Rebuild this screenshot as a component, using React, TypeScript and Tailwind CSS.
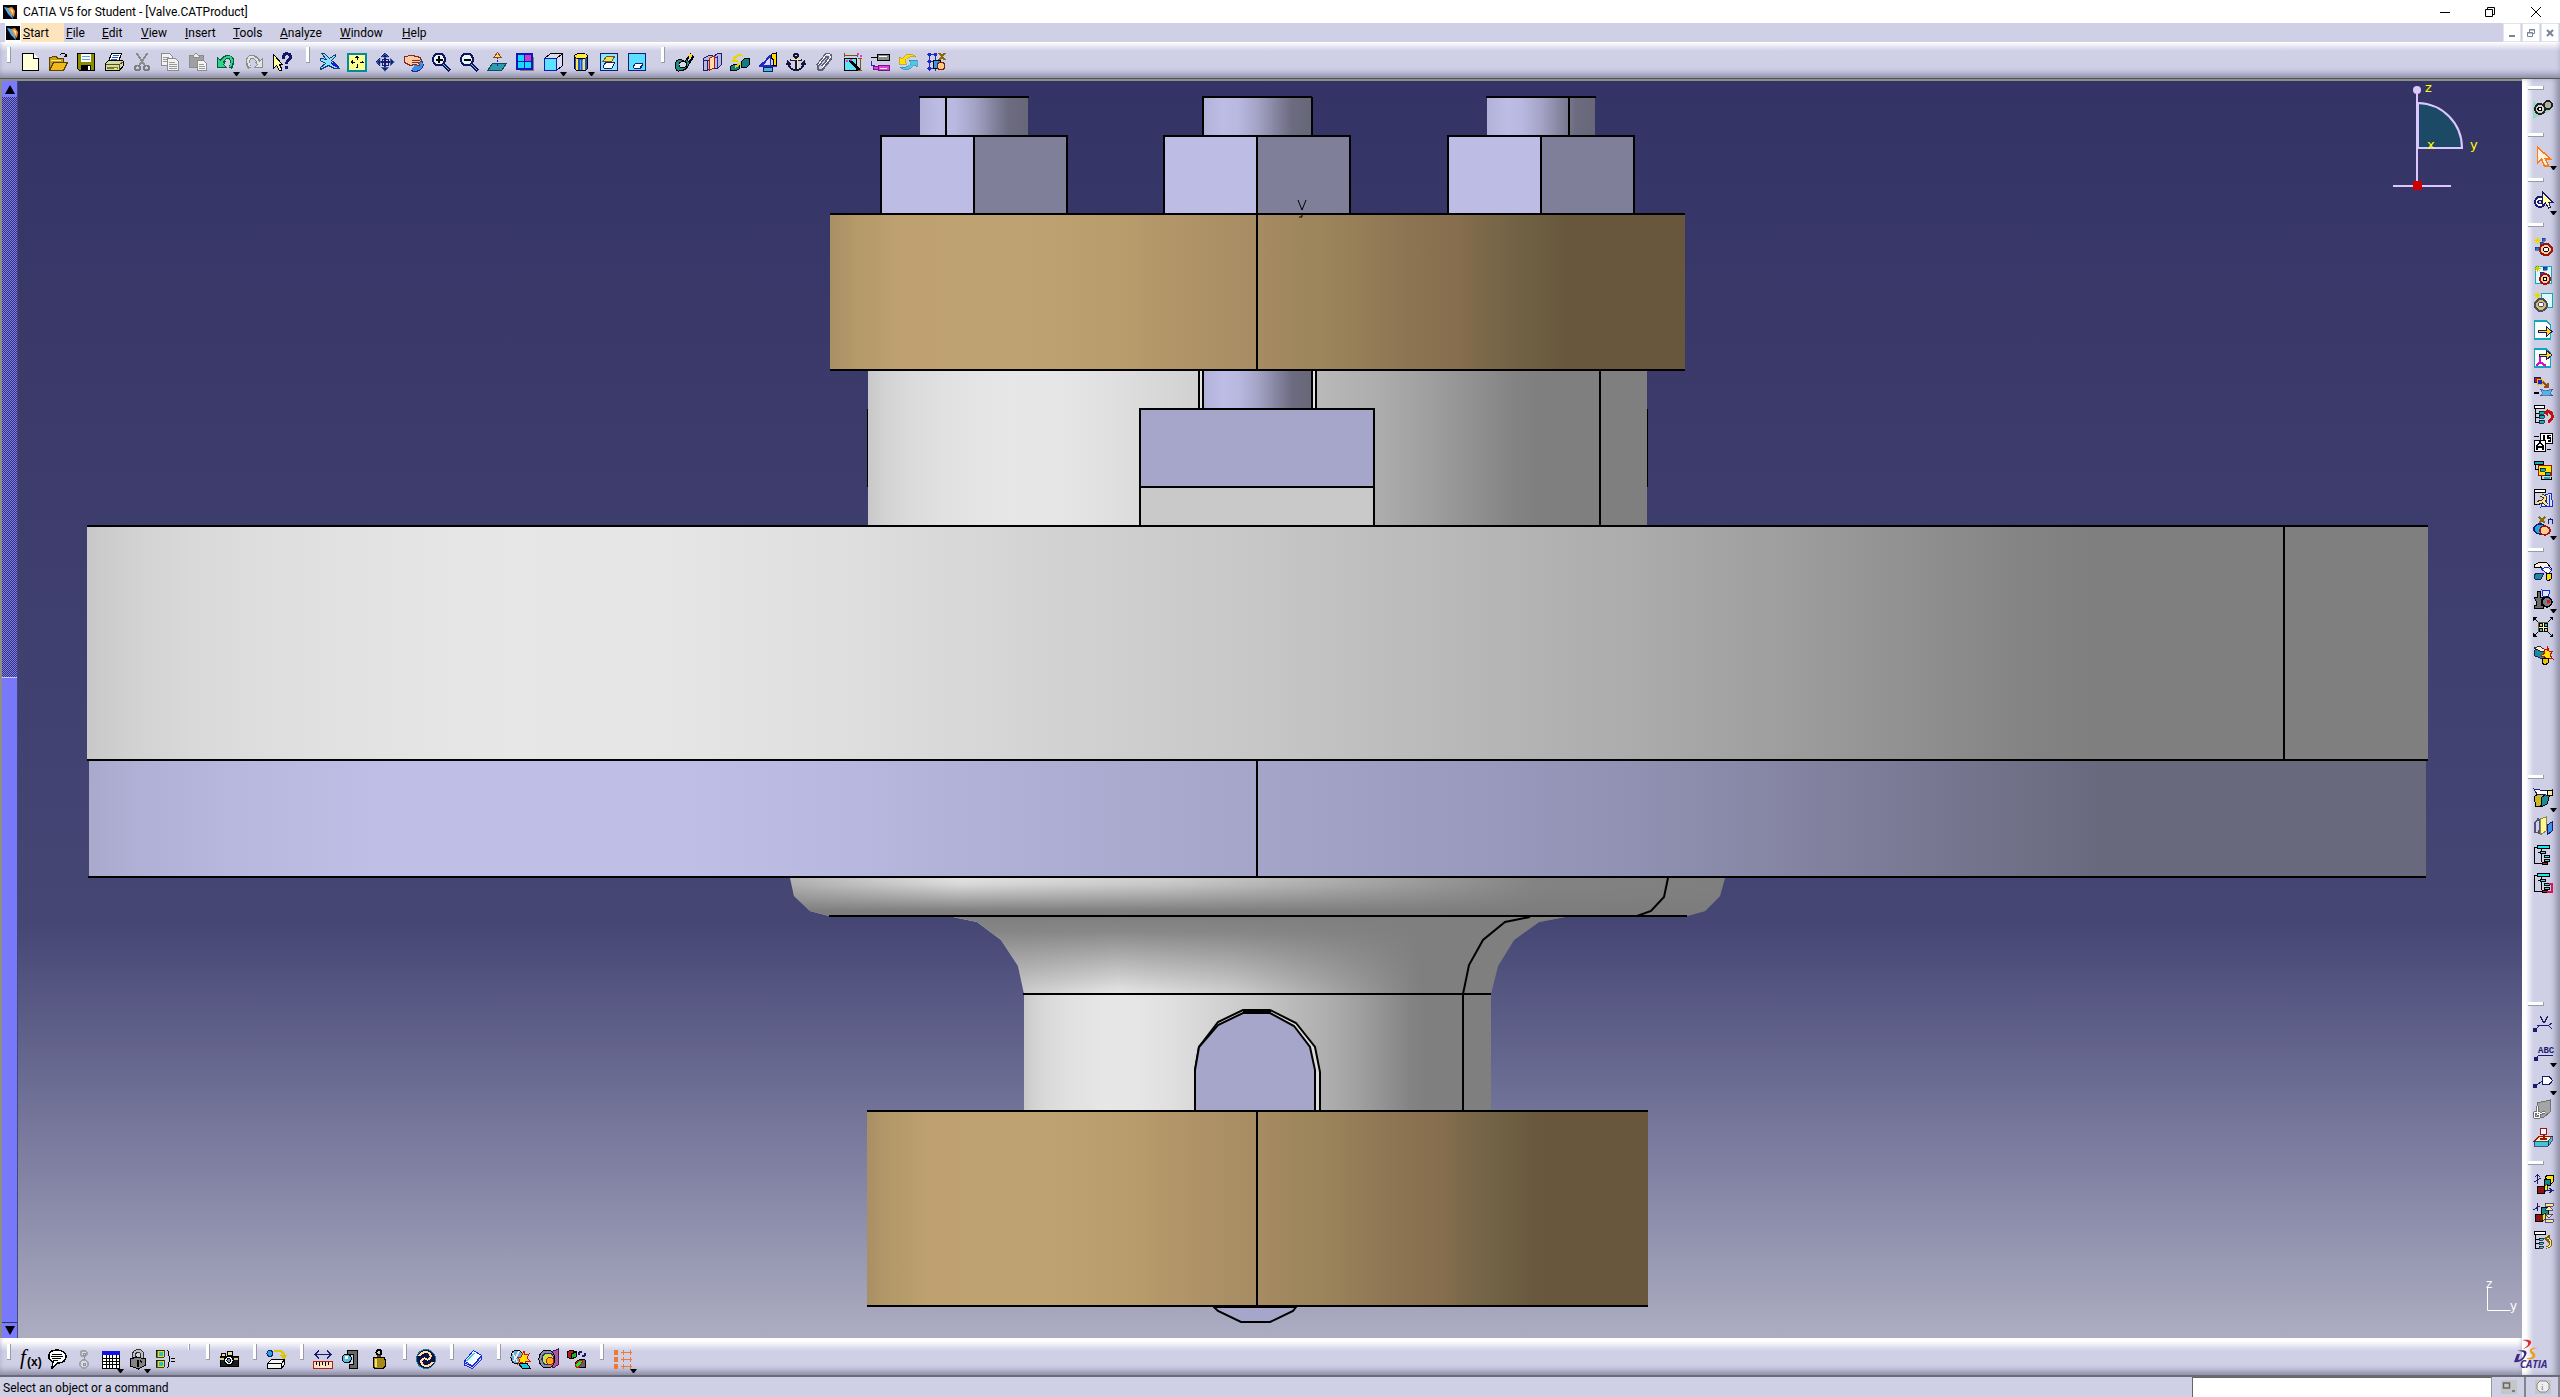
import type { ReactNode } from "react";

type Shape = [d: string, fill?: string, stroke?: string, width?: number];

const K = "#000";
const N = "#1a1a6e";

const ICONS: Record<string, Shape[]> = {
  new: [["M2.5 1.5h11l5 5v12h-16z", "#ffffd8", K], ["M13.5 1.5v5h5", "#fff", K]],
  open: [
    ["M1.5 17.5v-12h2l1-1h4l1 2h6v4", "#c8a018", "#5a4200"],
    ["M1.5 18.5l4-8h14l-4 8z", "#f2b91c", "#5a4200"],
    ["M3 8h10v1h-10z", "#ffe98a"],
    ["M11.5 3.5l2-2h3l2 3M18.5 1.5v3h-3", "none", K],
  ],
  save: [
    ["M1.5 1.5h17v17h-15l-2-2z", "#8c8c00", K],
    ["M5 2h10v8h-10z", "#fff"],
    ["M6 4.5h8M6 7.5h8", "none", "#5aa0e0"],
    ["M5 13h10v6h-10z", K],
    ["M12 14h2v4h-2z", "#fff"],
  ],
  print: [
    ["M7.5 1.5h10l-3 8h-10z", "#fff", K],
    ["M9 3.5h6M8 5.5h6M7 7.5h6", "none", "#2858c8"],
    ["M1.5 11.5l3-3h14l1 1v4l-4 5h-14z", "#d8d8a8", K],
    ["M15.5 12v6M1.5 12.5h14l4-3", "none", "#505020"],
    ["M3 15h11v2h-11z", "#7a7a20"],
    ["M10 16h3v1h-3z", "#ff0"],
  ],
  cut: [
    ["M4.5 1l8 12M15.5 1l-8 12", "none", "#8c8c8c", 2],
    ["M5.5 13.5a2.5 2.5 0 1 1-.1 0zM14.5 13.5a2.5 2.5 0 1 1-.1 0z", "none", "#7c7c7c", 2],
  ],
  copy: [
    ["M1.5 1.5h8l3 3v9h-11z", "#f2f2f2", "#8c8c8c"],
    ["M3 5.5h6M3 7.5h6M3 9.5h6", "none", "#9a9a9a"],
    ["M7.5 6.5h8l3 3v9h-11z", "#f2f2f2", "#8c8c8c"],
    ["M9 10.5h6M9 12.5h8M9 14.5h8M9 16.5h8", "none", "#9a9a9a"],
  ],
  paste: [
    ["M1.5 3.5h14v12h-14z", "#a0a0a0", "#8c8c8c"],
    ["M5 3.5l3-2 3 2v2h-6z", "#eee", "#8c8c8c"],
    ["M9.5 8.5h6l3 3v7h-9z", "#f4f4f4", "#8c8c8c"],
    ["M11 12.5h5M11 14.5h6M11 16.5h6", "none", "#9a9a9a"],
  ],
  undo: [
    ["M4 12c3-6 6-8 9-7s5 5 1 11", "none", "#075a3c", 4],
    ["M1.5 5.5v10h9l-3-3 2-3-3 1z", "#2fd48c", "#075a3c"],
    ["M5 11c3-5 5-6.5 8-6s4 5 1 10", "none", "#2fd48c", 2],
  ],
  redo: [
    ["M16 12c-3-6-6-8-9-7s-5 5-1 11", "none", "#8c8c8c", 4],
    ["M18.5 6.5v9h-8l3-3-2-2 3 0z", "#e4e4e4", "#8c8c8c"],
    ["M15 11c-3-5-5-6.5-8-6s-4 5-1 10", "none", "#e4e4e4", 2],
  ],
  help: [
    ["M1.5 2.5v14l3-3 3 5h2v-2l-2-4h3z", "#ffffa0", K],
    ["M11.5 7v-3c1-3 7-3 7 1 0 3-4 3-4 7M14.5 14v3", "none", "#14146a", 3],
  ],
  fly: [
    ["M2.5 1.5l5 6-6-1v2l5 3-5 4v2l8-4 6 3 5 0-3-4-5-4 4-4v-2l-6 4-5-5z", "#8ce0ff", "#103c78", 1],
    ["M12 11l7 4", "none", "#1818e0", 2],
  ],
  fit: [
    ["M1 1.5h18v17h-18z", "#ffff8c", "#008c9c", 2],
    ["M10 4v4M10 12v4M3.5 10h4M12.5 10h4", "none", K, 1],
    ["M8 5.5h4l-2-2.5zM8 14.5h4l-2 2.5zM5.5 8v4l-2.5-2zM14.5 8v4l2.5-2z", K],
  ],
  pan: [
    ["M10 3v14M3 10h14", "none", N, 2],
    ["M6 5h8l-4-4.5zM6 15h8l-4 4.5zM5 6v8l-4.5-4zM15 6v8l4.5-4z", N, "#4aa0d8", 0.5],
    ["M7 7h6v6h-6z", "none", N],
  ],
  rotate: [
    ["M8 18.5a6 5 0 1 0 8-12", "#3c8ce8", "#1c2c9c"],
    ["M1.5 4.5l8-1 8 2 1 4-3 1 1 3-5-1-4 1-6-3z", "#ffc8a8", "#7c2c1c"],
    ["M9 8h8M9 10h7", "none", "#7c2c1c"],
  ],
  zoomin: [
    ["M8 1.5a6 6 0 1 1-.1 0z", "#e4f6ff", "#14145a", 2],
    ["M12 12l7 7", "none", "#14145a", 3],
    ["M12 12l6.5 6.5", "none", "#5cc8f0", 1],
    ["M4.5 7.5h7M8 4v7", "none", K, 2],
  ],
  zoomout: [
    ["M8 1.5a6 6 0 1 1-.1 0z", "#e4f6ff", "#14145a", 2],
    ["M12 12l7 7", "none", "#14145a", 3],
    ["M12 12l6.5 6.5", "none", "#5cc8f0", 1],
    ["M4.5 7.5h7", "none", K, 2],
  ],
  normal: [
    ["M.5 18.5l5-7h14l-5 7z", "#2c9cac", "#0c4c5c"],
    ["M10.5 14v-2M10.5 10v-2M10.5 7v-2", "none", "#1818c0", 1],
    ["M7 5h7l-3.5-4.5z", "#ffe060", "#8a4a1c", 1],
  ],
  multi: [
    ["M5 5h14v14h-14z", "#7c7c8c"],
    ["M2 2h15v15h-15z", "#14dcff", "#1414c0", 2],
    ["M10 3h6v6h-6z", "#c83cc8"],
    ["M9.5 1v17M1 9.5h17", "none", "#1414c0", 1],
  ],
  iso: [
    ["M1.5 6.5l6-5h12v12l-6 5", "#dcdcf0", K],
    ["M1.5 6.5h12v12h-12z", "#5ce4ff", "#1414c0"],
    ["M13.5 6.5l6-5", "none", K],
  ],
  shade: [
    ["M3.5 4v12c1 4 12 4 13 0v-12", "#1c50d8", K],
    ["M3.5 4a6.5 2.5 0 1 1 13 0 6.5 2.5 0 1 1-13 0", "#ffe840", K],
    ["M6 7v11M13 7v11", "none", "#ffe840", 2],
    ["M9 8v10M11 8v10", "none", "#5ca0f0", 1],
  ],
  hide: [
    ["M1.5 1.5h17v17h-17z", "#8ce8ff", N, 1],
    ["M4 9l4-5h8l-3 5z", "#f4d868", "#6c5c10"],
    ["M4 15l3-5h9l-3 6h-8z", "#fff", N],
    ["M13 16l3-6", "none", N],
  ],
  swap: [
    ["M1.5 1.5h17v17h-17z", "#5ce0ff", N, 1],
    ["M6 15l3-4h7l-2 5h-7z", "#fff", N],
    ["M13 16l3-4", "none", N],
  ],
  coincide: [
    ["M1.5 12c0-5 6-6 9-2l6-8 3 3-5 8c-2 5-7 6-10 6s-3-3-3-7z", "#1c8c84", K],
    ["M5 13a4 3 0 1 0 8-1 4 3 0 1 0-8 1", "#d8d8ec", K],
    ["M13 8l4-6 2 2-4 6z", "#d0d0e8", K],
    ["M15 2h3v3h-3z", "#ffe000"],
  ],
  contact: [
    ["M1.5 6.5l5-3h4v11l-5 4h-4z", "#b8b8d8", N],
    ["M1.5 8.5h5M5.5 8v10", "none", N],
    ["M11.5 4.5l4-3h4v11l-4 4h-4z", "#b8b8d8", N],
    ["M15.5 4v12M12 5.5h3", "none", "#1c28c8"],
    ["M7.5 6.5l5-3v12l-5 3z", "#ffe0a0", "#c01010"],
  ],
  offset: [
    ["M11.5 9.5l3-3h5v6l-3 3h-5z", "#107c84", K],
    ["M.5 14.5l3-2h6v4l-3 2h-6z", "#107c84", K],
    ["M4 8c2-5 6-6 9-4M5 4l-2 5 5 0M11 11l-6 4", "none", "#e8d800", 2],
  ],
  angle: [
    ["M1.5 13.5l11-9v9z", "#d8d8f0", "#1c28c8"],
    ["M3 14l10-11M1 13.5h18", "none", "#1c28c8", 2],
    ["M5 15h9v4h-9z", "#3cc0d0", N],
    ["M14 2l4-1v12h-3l1-5-3-2z", "#ffd800", K],
  ],
  anchor: [
    ["M10 1.5a2 2 0 1 1-.1 0zM10 5v13M4 7.5h12", "none", "#14143c", 2],
    ["M2 11c1 5 4 7 8 7s7-2 8-7M1 13l1-3 3 3M19 13l-1-3-3 3", "none", "#14143c", 2],
    ["M11 6v11M5 7.5h10", "none", "#ffe890", 1],
  ],
  clip: [
    ["M3 13l8-10c3-3 8 0 6 4l-8 10c-3 3-7 0-5-3l8-9c2-1 3 1 2 2l-6 7", "none", "#606078", 2],
    ["M4 13l8-10c2-2 5 0 4 3l-8 10", "none", "#fff", 1],
  ],
  quick: [
    ["M2.5 6.5h12v12h-12z", "#5ce4f4", K],
    ["M2 3h13M2 1v4M15 1v4M18 6v12M16 6h4M16 18h4", "none", "#6c5c14", 1],
    ["M8 8l9 10", "none", K, 3],
    ["M4 8h2v2h-2zM8 7h2v2h-2zM15 1h2v2h-2zM18 3h2v2h-2z", "#f030d0"],
  ],
  flex: [
    ["M1 5.5h6M7 2.5h12v6h-12z", "#8c8c8c", K],
    ["M8 13.5h11v5h-11zM3 14.5h5v3h-5z", "#e040e0", "#7c107c"],
    ["M1.5 9v4h3", "none", "#1c28c8", 1],
    ["M9 4.5h8M10 16h7", "none", "#fff", 1],
  ],
  change: [
    ["M1 12l0-7 3 2c4-6 10-6 14-2-5-1-9 0-11 4l2 3z", "#ffe000", "#a07c00", 0.5],
    ["M19 8l0 7-3-2c-4 6-10 6-14 2 5 1 9 0 11-4l-2-3z", "#4cc8e8", "#0c6c9c", 0.5],
  ],
  reuse: [
    ["M1 2.5h10M1 9.5h10M1 16.5h8M3.5 1v18M9.5 1v18", "none", "#1c28c8", 1],
    ["M2 1h3v3h-3zM8 1h3v3h-3zM2 8h3v3h-3zM2 15h3v3h-3z", "#1c28c8"],
    ["M7 8h7v8h-7z", "#2c9cf0", K],
    ["M15 10a4 4 0 1 1-.1 0z", "#ffcc80", "#7c1c10"],
    ["M13 1l6 7M19 1l-6 7", "none", "#8a6c10", 2],
  ],
  gears: [
    ["M0 2l19 9-19 9z", "#9cd8c8"],
    ["M7 5a5 5 0 1 1-.1 0z", "#d0d0d0", "#202020", 2],
    ["M15 2a4 4 0 1 1-.1 0z", "#b0b0a0", "#202020", 2],
    ["M7 8a2 2 0 1 1-.1 0z", "#fff", K],
  ],
  select: [["M4.5 1v16l4-4 3 7h4l-3-7h5z", "#fff2e0", "#ff7a14", 1.5]],
  geoselect: [
    ["M7 6a5 5 0 1 1-.1 0z", "#fff", N, 2],
    ["M7 9a2 2 0 1 1-.1 0z", "#cfcfe6", N],
    ["M9.5 1v14l3-3 3 5 2-1-2-5h4z", "#ffff9c", N],
  ],
  component: [
    ["M1 4.5h7M4.5 1v7M2 2l5 5M7 2l-5 5", "none", "#e8d800", 1],
    ["M9 2h3v3h-3zM7 6h3v3h-3zM2 11h4v3h-4z", "#1c70e0", N, 0.5],
    ["M13 8a6 5.5 0 1 1-.1 0z", "#ffcc90", "#9c1410", 2],
    ["M13 11a2.5 2.5 0 1 1-.1 0z", "#fff", K],
  ],
  product: [
    ["M2 2.5h16v17h-16z", "#dffaff", "#10a8b8", 1],
    ["M1 4.5h7M4.5 1v7M2 2l5 5M7 2l-5 5", "none", "#d8c800", 1],
    ["M10 3h4v3h-4zM7 8h4v3h-4z", "#1c50c0", N, 0.5],
    ["M12 10a5 5 0 1 1-.1 0z", "#ffcc90", "#9c1410", 2],
    ["M12 13a2 2 0 1 1-.1 0z", "#fff", K],
  ],
  part: [
    ["M8.5 1.5h11v14h-11z", "#dffaff", "#10a8b8", 1],
    ["M8 7a6 6 0 1 1-.1 0z", "#d0bc78", "#4c4c5c", 2],
    ["M8 10a2.5 2.5 0 1 1-.1 0z", "#fff", "#4c4c5c"],
    ["M1 3.5h7M4.5 0v7M2 1l5 5M7 1l-5 5", "none", "#e8d800", 1],
  ],
  existing: [
    ["M1.5 1h12l4 4v14h-16z", "#fff", "#10a8b8", 1.5],
    ["M5 10.5h8v-4l6 5-6 5v-4h-8z", "#ffe000", N, 1],
  ],
  existpos: [
    ["M1.5 1h12l4 4v14h-16z", "#fff", "#10a8b8", 1.5],
    ["M6 6h7v-4l6 5-6 5v-4h-7z", "#ffe000", N, 1],
    ["M7 9v5l-4 4M7 14l6 4", "none", "#d010c8", 2],
  ],
  replace: [
    ["M1.5 1.5h6v5h-6z", "#c01818", N],
    ["M4 3h5v5h-5z", "#1c28c8", "#e8c000", 1],
    ["M10 6l5 5M15 7v4h-4", "none", "#9c4c10", 2],
    ["M7 13l5 2 8-2-3 4 3 3-8-1-5 1 3-3z", "#4cb8e8", N, 0.5],
    ["M1 17h5", "none", K, 2],
  ],
  reorder: [
    ["M1.5 1.5h10v3h-10z", "#fff", K],
    ["M2.5 4v14h5M2 9h5M2 13h5", "none", K],
    ["M6 7h5v3h-5zM6 11h5v3h-5zM6 16h5v3h-5z", "#10b0b8", K, 0.7],
    ["M13 8c8-2 8 8 2 10", "none", "#c01010", 3],
    ["M11 9l4-5v8z", "#c01010"],
  ],
  number: [
    ["M7.5 1.5h12v10h-12z", "#fff", K],
    ["M1.5 8.5h11v11h-11z", "#fff", K],
    ["M4 18v-4l3-4 3 4v4M4 15h6", "none", K, 1.5],
    ["M11 3v6M18 3.5h-3v2.5h2.5v3h-3", "none", K, 1.5],
    ["M1 4.5h5M14 17.5h4", "none", K],
  ],
  tree: [
    ["M1 1.5h9v3h-9z", "#10b0b8", K],
    ["M5.5 5.5h13v10h-13z", "#ffe800", "#a01010", 1.5],
    ["M7 8h5v3h-5zM12 12h5v3h-5z", "#10b0b8", K, 0.7],
    ["M2.5 5v4h3M8.5 16v3h10v-2", "none", K],
    ["M11 17h6v2h-6z", "#10b0b8"],
  ],
  load: [
    ["M1 1.5h11v3h-11z", "#fff", K],
    ["M1.5 4v12h5", "none", K],
    ["M12 7l6-2 2 13-12 1z", "#d8e4ff", "#1c28c8"],
    ["M13 8v10M16 7v11", "none", "#1c28c8"],
    ["M8 7l4 2-1 5 3 3M4 15l7-2", "none", "#3c3420", 4],
    ["M8 7l4 2-1 5 3 3M4 15l7-2", "none", "#f8e4a0", 2],
  ],
  multiinst: [
    ["M7 8a6 5 0 1 1-.1 0z", "#1ca8e0", N, 1.5],
    ["M12 10a5 4.5 0 1 1-.1 0z", "#ffcc90", "#9c1410", 1.5],
    ["M6 1l6 6M12 1l-6 6", "none", "#8a6c10", 2],
    ["M15.5 8v-5M15.5 4.5l2-1.5 2 1v4", "none", N, 1],
  ],
  manip: [
    ["M1.5 4l5-3h7l5 7-6 1-5-3-6 1z", "#fff0e0", K],
    ["M8 8l6-2 5 3-4 4z", "#fff", "#1c28e0"],
    ["M1 14l3-2h7l-3 6h-6z", "#1c8c94", N],
    ["M13 12h5v6l-3 2-2-2z", "#ffe000", K],
  ],
  snap: [
    ["M4 2h3v6h3l-2 4v4h2v3h-9v-3h2v-4l-2-4h3z", "#6c6c6c", K],
    ["M9 1l8 1-2 6-5-1z", "#dce8ff", "#1c28e0"],
    ["M14 8a5 5 0 1 1-.1 0z", "#7c7c84", K, 1.5],
    ["M14 11h3v3h-3z", "#d01818"],
  ],
  explode: [
    ["M1 1l5 5M19 1l-5 5M1 19l5-5M19 19l-5-5", "none", K, 1],
    ["M0 0h4l-4 4zM20 0h-4l4 4zM0 20h4l-4-4zM20 20h-4l4-4z", K],
    ["M5.5 5.5h9v9h-9z", "#ffffc0", "#606040"],
    ["M6.5 6.500h3v3h-3zM11.5 11.5h3v3h-3z", "#f0d060", K, 1],
    ["M11.5 6.5h3v3h-3zM6.5 11.5h3v3h-3z", "#40b8b8", K, 1],
  ],
  clash: [
    ["M1 6l4-3h5l4 6-4 5-8-3z", "#1c8c94", N],
    ["M1 3l5-2 6 4-3 2z", "#fff0e0", K, 0.8],
    ["M14 1l2 5 4 0-3 4 3 4-5-1-3 3 0-4-4-1 4-3-1-4 3 1z", "#ffe000", "#c01010"],
    ["M9 13h6v5l-3 2-3-2z", "#e8c800", K],
  ],
  section: [
    ["M1 9l4-3h7v11l-9 2z", "#c8b828", K],
    ["M8 10l5-4h4l-3 10-6 3z", "#1c8c94", K],
    ["M1 1l12 2 6-1v5h-6l-9-1z", "#fff", N],
    ["M14 2h5v5h-5z", "#ffe890", K],
  ],
  symmetry: [
    ["M2 7l3-4 2 2-1 12-4-1z", "none", "#505078", 1.5],
    ["M7 3l6-2v14l-6 4z", "#fff890", "#8a8a4c"],
    ["M14 9l5-3v9l-5 4z", "#3c90e8", N],
  ],
  assembly: [
    ["M4 1.5h12v3h-12z", "#20e8f0", K],
    ["M4.5 3h-3v16h7M8.5 5v13M5 8h5", "none", K, 1],
    ["M7 7h5v2h-5zM11 11h5v2h-5zM11 15h5v2h-5z", "#20e8f0", K, 1],
    ["M9 18h5v2h-5z", "#e01010", K, 1],
  ],
  assembly2: [
    ["M4 1.5h12v3h-12z", "#20e8f0", K],
    ["M4.5 3h-3v16h7M8.5 5v13M5 8h5", "none", K, 1],
    ["M7 7h5v2h-5zM11 11h5v2h-5zM11 15h5v2h-5z", "#20e8f0", K, 1],
    ["M9 18h5v2h-5z", "#e01010", K, 1],
    ["M16 12h3v8h-5", "none", "#e01050", 1.5],
  ],
  weld: [["M7 1l4 7 4-7", "none", N, 1.2], ["M4 10.5h12M16 10l3-2M16 11l3 3M2 15l4-4", "none", N, 1], ["M0 13h4v4h-4z", N]],
  text: [["M5.5 12.5h14M2 16l4-4", "none", N], ["M1 14h4v4h-4z", N]],
  flag: [["M9.5 5.5h7l3 4-3 4h-7z", "#fff", N, 1.2], ["M9 10l-5 4", "none", N, 1], ["M0 13h4v4h-4z", N]],
  view3d: [
    ["M4 4l13-3v12l-6 5h-7z", "#a4a4a4", "#707070"],
    ["M4 16v-9M4 16l8-3M1 16a3 3 0 1 0 6 0 3 3 0 1 0-6 0", "none", "#707070", 3],
    ["M4 16v-9M4 16l8-3M1 16a3 3 0 1 0 6 0 3 3 0 1 0-6 0", "none", "#fff", 1],
  ],
  annotate: [
    ["M7.5 1.5h6v6h-6z", "#fff", "#a01010"],
    ["M1.5 14l5-5h13l-4 5z", "#fff0a0", "#a01010"],
    ["M1 14h14v5h-14zM15 14l4-5v5l-4 5z", "#40c8d0", N, 0.7],
    ["M10.5 7v4M7 12h7", "none", "#a01010", 2],
  ],
  move1: [
    ["M12 3l3-2h5v7l-3 3z", "#ffe800", K, 1],
    ["M11 5h6v6h-6z", "#108c8c", K],
    ["M11 12l3-2v6l-3 2z", "#ffe800", K, 0.7],
    ["M4 12h7v7h-7z", "#901018", K],
    ["M4.5 1v9M1 8l7-4M2 3l2.5-2.5L7 3M12 16.5h7M16 14l4 2.5-4 2.5", "none", N, 1],
  ],
  move2: [
    ["M8 5h7v7h-7z", "#108c8c", K],
    ["M2 12h7v7h-7z", "#901018", K],
    ["M9 13l3-2v6l-3 2z", "#ffe800", K, 0.7],
    ["M12 1h8v3h-8zM12 17h8v3h-8zM12 8h8l-4-4zM12 12h8l-4 4z", "#ffe890", N, 0.7],
    ["M4 1v8M0 8l7-4", "none", N, 1],
  ],
  treeundo: [
    ["M1 1.5h11v3h-11z", "#fff", K],
    ["M2.5 4v14h3M2 9h4M2 13h4", "none", K],
    ["M6 8h4v2h-4zM6 12h4v2h-4zM6 16h4v2h-4z", "#40c8e0", K, 0.7],
    ["M13 17c6 1 6-7 1-9l3-2M13 8l4 4", "none", "#7c5c10", 3],
    ["M13 17c6 1 6-7 1-9", "none", "#ffe890", 1],
  ],
  formula: [],
  comment: [
    ["M10 1c12 0 12 13 1 13l-6 5 1-6c-7-3-5-12 4-12z", "#fff", K, 1.5],
    ["M5 5.5h10M4 7.5h12M5 9.5h9M6 11.5h5", "none", K, 1],
  ],
  links: [
    ["M10 1.5a3 3 0 1 1-.1 0zM10 11a4 4 0 1 1-.1 0z", "#dcdce4", "#a4a4ac", 2],
    ["M10 7v4M9 4h2v2h-2zM9 14h2v2h-2z", "none", "#909098", 1],
  ],
  table: [
    ["M1.5 4.5h17v15h-17z", "#fff", K],
    ["M1 2h18v4h-18z", "#1010e8"],
    ["M1 9.5h18M1 12.5h18M1 15.5h18M5.5 6v14M8.5 6v14M11.5 6v14M15.5 6v14", "none", K],
  ],
  lock: [
    ["M6 9v-4c1-4 8-4 8 0v5", "none", "#303030", 4],
    ["M6 9v-4c1-4 8-4 8 0v5", "none", "#c0c0c0", 2],
    ["M2.5 10l6-2 9 2v6l-7 4-8-3z", "#848484", K],
    ["M10 11v7M12 12l2 1", "none", K, 2],
  ],
  params: [
    ["M1 1h8v7h-8zM1 11h8v7h-8z", "#707040", K, 0.7],
    ["M3 2h5v5h-5zM3 12h5v5h-5z", "#28c0c0", "#e8e000", 1],
    ["M12 1c3 0 1 8 3 9-2 1 0 9-3 9M16 9h4M16 12h4", "none", K, 1],
  ],
  camera: [
    ["M1 7h18v10h-18z", "#1c1c1c", K],
    ["M2 4h4v3h-4zM8 2h5v4h-5z", "#e8d89c", K],
    ["M10 7a4.5 4.5 0 1 1-.1 0z", "#fff", K, 1.5],
    ["M10 9.5a2 2 0 1 1-.1 0z", "#50a0c8", K],
    ["M1 9h4v2h-4zM15 9h4v2h-4z", "#d8c88c"],
  ],
  catalog: [
    ["M4 1.5a3 3 0 1 1-.1 0z", "#20a8e0", N],
    ["M8 1.5h6l4 3v4M15 6l3 3 2-3", "none", "#d8c800", 2],
    ["M1.5 14.5l4-4h13v5l-3 4h-14z", "#f4f4f4", K],
    ["M1.5 14.5h14v5M15.5 14.5l3-4", "none", K],
  ],
  measure: [
    ["M2 5.5h16M6 1.5l-4 4 4 4M14 1.5l4 4-4 4", "none", N, 1.2],
    ["M.5 12.5h19v7h-19z", "#ffe0c0", "#b02018"],
    ["M3.5 13v3M6.5 13v4M9.5 13v3M12.5 13v4M15.5 13v3", "none", K],
  ],
  caliper: [
    ["M6 1h10v18h-8v-4h4v-10h-6z", "#686868", K],
    ["M6 5a4.5 4.5 0 1 1-.1 0z", "#50c0e0", K],
    ["M4 7h3v3h-3z", "#fff"],
  ],
  inertia: [
    ["M10 1a2.5 2.5 0 1 1-.1 0z", "none", K, 2],
    ["M8 6h4v3h-4z", "#4c4014"],
    ["M5 8.5h10l1 2v7l-2 2h-8l-2-2v-7z", "#a88818", K],
    ["M7 10v8", "none", "#f0dc70", 2],
  ],
  update: [
    ["M10 0a10 10 0 1 1-.1 0z", "#187c90"],
    ["M10 1a9 9 0 1 1-.1 0z", "#101048"],
    ["M3 7c3-5 9-5 11-2 2 3-1 7-4 5M17 13c-3 5-9 5-11 2-2-3 1-7 4-5", "none", "#ffe0a0", 2],
  ],
  book: [
    ["M1.5 12l9-10.5 8 5-9 10.5z", "#f0ffff", "#1c28e0"],
    ["M1.5 12v4l8 3.5 9-9v-4M1.5 14l8 3.5 9-10", "none", "#1c28e0", 1],
    ["M4 12l7-8", "none", "#40d0d0", 1.5],
  ],
  mat1: [
    ["M7 1a6 7 0 1 1-.1 0z", "#68b0d0", K],
    ["M3 4l4 9M9 2l-5 10", "none", "#e8e8f8", 1.5],
    ["M14 2l1 4 4-1-2 4 3 3-4 0-1 4-3-3-4 2 2-4-3-3 4 0z", "#ffe000", "#d01010"],
    ["M9 15l8-1 3 5h-8z", "#18c8d8", K],
  ],
  mat2: [
    ["M13 3l7-3v16l-5 3z", "#a858a0", "#4c184c"],
    ["M9 1a8 9 0 1 1-.1 0z", "#8890a0", K],
    ["M10 4a6 6 0 1 1-.1 0z", "#c8e040", "#28288c"],
    ["M12 8a3.5 4 0 1 1-.1 0z", "#ffb010", "#c01010"],
  ],
  mat3: [
    ["M1 3l4-2 5 2v5l-5 2-4-2z", "#c01818", K],
    ["M5 5l5-2v5l-5 2z", "#18b818", K],
    ["M13 3h3M13 3v3M19 7h-3M19 7v-3", "none", N, 1.5],
    ["M9 17c0-5 6-8 10-6v7h-8z", "#606060", K],
    ["M9 17c2-5 5-6 8-5l-5 7z", "#20e820", "#c01818"],
  ],
  pattern: [
    ["M2 2h2v3h-2zM2 9h2v3h-2zM2 16h2v3h-2z", "none", "#f07830", 1.5],
    ["M8 3.5h11M8 10.5h11M8 17.5h11M10 1v5M17 1v5M10 8v5M17 8v5M10 15v5M17 15v5", "none", "#f07830", 1],
  ],
};

function Icon({ name }: { name: string }) {
  return (
    <svg viewBox="0 0 20 20" shapeRendering="crispEdges" className="size-5 overflow-visible" aria-hidden="true">
      {ICONS[name].map(([d, fill = "none", stroke, w = 1], i) => (
        <path key={i} d={d} fill={fill} stroke={stroke} strokeWidth={stroke ? w : 0} />
      ))}
      {name === "text" && (
        <text x="5" y="10" fontSize="9" fontWeight="bold" fill={N} fontFamily="Liberation Mono">ABC</text>
      )}
      {name === "formula" && (
        <>
          <text x="0" y="15" fontSize="21" fontStyle="italic" fontFamily="Liberation Serif">f</text>
          <text x="7" y="17" fontSize="12" fontWeight="bold" fontFamily="Liberation Sans">(x)</text>
        </>
      )}
    </svg>
  );
}

type Tool = { icon: string; label: string; menu?: boolean };
const t = (icon: string, label: string, menu = false): Tool => ({ icon, label, menu });

function ToolButton({ tool, narrow = false }: { tool: Tool; narrow?: boolean }) {
  return (
    <button
      type="button"
      aria-label={tool.label}
      className={`relative flex h-7 shrink-0 items-center justify-center ${narrow ? "w-[27px]" : "w-7"}`}
    >
      <Icon name={tool.icon} />
      {tool.menu && (
        <svg viewBox="0 0 7 4" className="absolute right-0 bottom-0 h-1 w-[7px]" aria-hidden="true">
          <path d="M0 0h7L4 4H3z" />
        </svg>
      )}
    </button>
  );
}

function Grip() {
  return <span className="mb-3.5 h-4 w-1 shrink-0 border-r border-b border-[#9a9aa8] bg-white" />;
}

function HGroup({ tools, narrow }: { tools: Tool[]; narrow?: boolean }) {
  return (
    <div role="toolbar" className="flex items-center gap-[5px]">
      <Grip />
      <div className="flex">
        {tools.map((x) => (
          <ToolButton key={x.icon} tool={x} narrow={narrow} />
        ))}
      </div>
    </div>
  );
}

function VGroup({ tools, className = "" }: { tools: Tool[]; className?: string }) {
  return (
    <div role="toolbar" aria-orientation="vertical" className={`flex flex-col gap-[5px] ${className}`}>
      <span className="h-1 w-4 border-r border-b border-[#9a9aa8] bg-white" />
      <div className="ml-px flex flex-col">
        {tools.map((x) => (
          <ToolButton key={x.icon} tool={x} />
        ))}
      </div>
    </div>
  );
}

const STANDARD = [
  t("new", "New"), t("open", "Open"), t("save", "Save"), t("print", "Print"), t("cut", "Cut"),
  t("copy", "Copy"), t("paste", "Paste"), t("undo", "Undo", true), t("redo", "Redo", true), t("help", "What's This?"),
];
const VIEW = [
  t("fly", "Fly Mode"), t("fit", "Fit All In"), t("pan", "Pan"), t("rotate", "Rotate"), t("zoomin", "Zoom In"),
  t("zoomout", "Zoom Out"), t("normal", "Normal View"), t("multi", "Create Multi-View"), t("iso", "Isometric View", true),
  t("shade", "Shading with Edges", true), t("hide", "Hide/Show"), t("swap", "Swap Visible Space"),
];
const CONSTRAINTS = [
  t("coincide", "Coincidence Constraint"), t("contact", "Contact Constraint"), t("offset", "Offset Constraint"),
  t("angle", "Angle Constraint"), t("anchor", "Fix Component"), t("clip", "Fix Together"), t("quick", "Quick Constraint"),
  t("flex", "Flexible Sub-Assembly"), t("change", "Change Constraint"), t("reuse", "Reuse Pattern"),
];
const SIDE: { tools: Tool[]; className: string }[] = [
  { tools: [t("gears", "Assembly Design")], className: "mt-[7px]" },
  { tools: [t("select", "Select", true)], className: "mt-2.5" },
  { tools: [t("geoselect", "Selection Sets", true)], className: "mt-2" },
  {
    tools: [
      t("component", "Component"), t("product", "Product"), t("part", "Part"), t("existing", "Existing Component"),
      t("existpos", "Existing Component With Positioning"), t("replace", "Replace Component"),
      t("reorder", "Graph Tree Reordering"), t("number", "Generate Numbering"), t("tree", "Selective Load"),
      t("load", "Manage Representations"), t("multiinst", "Fast Multi-Instantiation", true),
    ],
    className: "mt-2",
  },
  { tools: [t("manip", "Manipulation"), t("snap", "Snap", true), t("explode", "Explode"), t("clash", "Stop on Clash")], className: "mt-2" },
  {
    tools: [t("section", "Split", true), t("symmetry", "Symmetry"), t("assembly", "Associativity"), t("assembly2", "Publish")],
    className: "mt-[106px]",
  },
  {
    tools: [t("weld", "Weld Feature"), t("text", "Text with Leader", true), t("flag", "Flag Note", true), t("view3d", "Front View"), t("annotate", "3D Annotation")],
    className: "mt-[106px]",
  },
  { tools: [t("move1", "Create Scene"), t("move2", "Enhanced Scene"), t("treeundo", "Scene Browser")], className: "mt-2.5" },
];
const KNOWLEDGE = [
  t("formula", "Formula"), t("comment", "Comment and URLs"), t("links", "Check"), t("table", "Design Table", true),
  t("lock", "Lock Parameters", true), t("params", "Equivalent Dimensions"),
];
const BOTTOM = [
  [t("camera", "Capture")],
  [t("catalog", "Catalog Browser")],
  [t("measure", "Measure Between"), t("caliper", "Measure Item"), t("inertia", "Measure Inertia")],
  [t("update", "Update All")],
  [t("book", "Annotations")],
  [t("mat1", "Clash"), t("mat2", "Sectioning"), t("mat3", "Compare Products")],
  [t("pattern", "Grid", true)],
];

const MENUS: [string, string][] = [
  ["File", "w-9"], ["Edit", "w-[39px]"], ["View", "w-11"], ["Insert", "w-12"], ["Tools", "w-[47px]"],
  ["Analyze", "w-[60px]"], ["Window", "w-[62px]"], ["Help", "w-11"],
];

function AppLogo() {
  return (
    <svg viewBox="0 0 14 14" className="size-3.5 shrink-0" aria-hidden="true">
      <rect width="14" height="14" fill="#05050f" />
      <path d="M1 2l5 1 3 5 1 6L5 9z" fill="#58a8e0" />
      <path d="M5 3l4-1 3 4-1 6-3-3z" fill="#f09030" />
      <path d="M7 4l3 1v4z" fill="#ffe8b8" />
    </svg>
  );
}

function Gradient({ id, stops }: { id: string; stops: [number, string][] }) {
  return (
    <linearGradient id={id}>
      {stops.map(([o, c]) => (
        <stop key={o} offset={`${o}%`} stopColor={c} />
      ))}
    </linearGradient>
  );
}

function Bolt({ cx, left, seam }: { cx: number; left: number; seam?: number }) {
  return (
    <g>
      <rect x={left} y="98" width="108" height="38" fill="url(#shaft)" />
      <path d={`M${left - 1} 97h110M${cx - 94} 136h188`} stroke={K} strokeWidth="2" />
      {seam ? (
        <path d={`M${seam} 97v39`} stroke={K} strokeWidth="2" />
      ) : (
        <path d={`M${left} 97v39M${left + 109} 97v39`} stroke={K} strokeWidth="2" />
      )}
      <rect x={cx - 93} y="137" width="93" height="77" fill="#bdbce4" />
      <rect x={cx} y="137" width="93" height="77" fill="#807f9a" />
      <path d={`M${cx - 93} 136v78M${cx} 136v78M${cx + 93} 136v78`} stroke={K} strokeWidth="2" />
    </g>
  );
}

function Model() {
  return (
    <svg
      viewBox="18 81 2504 1257"
      preserveAspectRatio="xMidYMid meet"
      className="absolute inset-0 size-full overflow-visible"
      role="img"
      aria-label="Front view of the valve assembly"
      fill="none"
    >
      <defs>
        <Gradient id="grey" stops={[[0, "#c8c8c8"], [2, "#d2d2d2"], [5, "#dadada"], [10, "#e1e1e1"], [18, "#e7e7e7"], [24, "#e6e6e6"], [31, "#e0e0e0"], [38, "#d7d7d7"], [43, "#d0d0d0"], [50, "#c7c7c7"], [58, "#b9b9b9"], [66, "#acacac"], [72, "#9f9f9f"], [78, "#909090"], [83, "#838383"], [86, "#7f7f7f"], [100, "#7f7f7f"]]} />
        <Gradient id="tan" stops={[[0, "#a98f65"], [3, "#b49969"], [5, "#b79c6b"], [8, "#bfa171"], [22, "#bfa272"], [27, "#bda06f"], [35, "#b79c6b"], [38, "#b49669"], [45, "#ac9166"], [50, "#a78b62"], [55, "#9f875d"], [60, "#998159"], [66, "#8f7755"], [74, "#856d4d"], [76, "#7c694a"], [81, "#706144"], [86, "#68573d"], [100, "#68573d"]]} />
        <Gradient id="lilac" stops={[[0, "#a9a9cc"], [2, "#b0b0d6"], [7, "#b9b9e0"], [13, "#bebee6"], [25, "#bebee6"], [32, "#b8b8e0"], [40, "#afafd5"], [50, "#a5a5ca"], [60, "#9999bd"], [66, "#9191b3"], [73, "#8484a2"], [80, "#75758f"], [86, "#69697e"], [100, "#69697e"]]} />
        <Gradient id="shaft" stops={[[0, "#b2b1d8"], [18, "#bdbce5"], [32, "#b9b8e0"], [50, "#a5a4c7"], [66, "#8887a3"], [82, "#6c6b80"], [100, "#676779"]]} />
        <Gradient id="lip" stops={[[0, "#b4b4b4"], [18, "#e4e4e4"], [40, "#d0d0d0"], [60, "#acacac"], [80, "#838383"], [100, "#7f7f7f"]]} />
        <linearGradient id="lipShade" x2="0" y2="1">
          <stop offset="0" stopColor="#7f7f7f" stopOpacity="0" />
          <stop offset="0.2" stopColor="#7f7f7f" stopOpacity="0.15" />
          <stop offset="0.85" stopColor="#7c7c7c" stopOpacity="0.95" />
          <stop offset="1" stopColor="#7c7c7c" />
        </linearGradient>
        <linearGradient id="neckShade" x2="0" y2="1">
          <stop offset="0" stopColor="#7f7f7f" />
          <stop offset="0.2" stopColor="#7f7f7f" stopOpacity="0.9" />
          <stop offset="0.6" stopColor="#7f7f7f" stopOpacity="0.45" />
          <stop offset="1" stopColor="#7f7f7f" stopOpacity="0" />
        </linearGradient>
        <linearGradient id="neckBase" gradientUnits="userSpaceOnUse" x1="1024" x2="1491" y1="0" y2="0">
          <stop offset="0" stopColor="#cecece" />
          <stop offset="0.2" stopColor="#e7e7e7" />
          <stop offset="0.45" stopColor="#cecece" />
          <stop offset="0.65" stopColor="#a8a8a8" />
          <stop offset="0.85" stopColor="#7f7f7f" />
        </linearGradient>
      </defs>

      <Bolt cx={974} left={920} seam={946} />
      <Bolt cx={1257} left={1203} />
      <Bolt cx={1541} left={1487} seam={1569} />

      <rect x="868" y="371" width="779" height="155" fill="url(#grey)" />
      <path d="M867.5 409v78M1647.5 409v78" stroke={K} strokeWidth="1" />
      <path d="M1600 371v155" stroke={K} strokeWidth="2" />
      <rect x="830" y="215" width="855" height="155" fill="url(#tan)" />
      <path d="M830 214h855M830 370h855M1257 213v157" stroke={K} strokeWidth="2" />
      <path d="M1298 200l4 10 4-10M1298 214h4v3h-3" stroke={K} strokeWidth="1" />

      <rect x="1199" y="371" width="117" height="38" fill="#e4e4e4" />
      <rect x="1203" y="371" width="109" height="38" fill="url(#shaft)" />
      <path d="M1199 371v38M1203 371v38M1312 371v38M1316 371v38" stroke={K} strokeWidth="2" />
      <rect x="1140" y="409" width="234" height="78" fill="#a6a6ca" />
      <rect x="1140" y="487" width="234" height="39" fill="#c9c9c9" />
      <path d="M1140 526v-117h234v117M1140 487h234" stroke={K} strokeWidth="2" />

      <rect x="87" y="526" width="2341" height="234" fill="url(#grey)" />
      <rect x="89" y="761" width="2337" height="116" fill="url(#lilac)" />

      <path d="M790 878l4 18 16 15 19 5h858l18-5 15-15 5-18z" fill="url(#lip)" />
      <path d="M790 878l4 18 16 15 19 5h858l18-5 15-15 5-18z" fill="url(#lipShade)" />
      <path d="M953 917l24 5 24 18 17 26 6 28h467l7-28 16-26 25-18 26-5z" fill="url(#neckBase)" />
      <path d="M953 917l24 5 24 18 17 26 6 28h467l7-28 16-26 25-18 26-5z" fill="url(#neckShade)" />
      <rect x="1024" y="994" width="467" height="117" fill="url(#grey)" />
      <path d="M87 526h2341M87 760h2341M2284 526v234M88 877h2338M1257 760v117M829 916h858M1023 994h468" stroke={K} strokeWidth="2" />
      <path d="M1668 878l-4 19-13 14-14 5M1530 917l-25 5-22 18-14 25-6 29v117" stroke={K} strokeWidth="2" />

      <path d="M1195 1111v-41l4-23 19-25 25-12h27l26 13 19 24 5 25v39z" fill="#dcdcdc" stroke={K} strokeWidth="2" />
      <path d="M1195 1111v-41l4-23 19-22 25-12 27 0 24 13 16 21 5 23v41z" fill="#a6a6ca" stroke={K} strokeWidth="2" />
      <path d="M1243 1012h28" stroke={K} strokeWidth="3" />

      <path d="M1214 1307l4 4 23 11h29l23-11 3-4z" fill="#a6a6ca" stroke={K} strokeWidth="2" />
      <rect x="867" y="1111" width="781" height="195" fill="url(#tan)" />
      <path d="M867 1111h781M867 1306h781M1257 1111v195" stroke={K} strokeWidth="2" />

      <path d="M2418 103a45 45 0 0 1 44 45h-44z" fill="#1c4a66" stroke="#dcc8ff" strokeWidth="2" />
      <path d="M2417 90v96M2393 186h58" stroke="#dcc8ff" strokeWidth="2" />
      <circle cx="2417" cy="90" r="4" fill="#dcc8ff" />
      <rect x="2413" y="181" width="9" height="9" fill="#d00000" />
      <g fill="#ff0" fontFamily="DejaVu Sans" fontSize="13">
        <text x="2425" y="92">z</text>
        <text x="2427" y="149">x</text>
        <text x="2470" y="149">y</text>
      </g>
      <path d="M2487.5 1287v23.5h23" stroke="#fff" strokeWidth="1" />
      <g fill="#fff" fontFamily="DejaVu Sans" fontSize="12">
        <text x="2486" y="1288">z</text>
        <text x="2510" y="1310">y</text>
      </g>
    </svg>
  );
}

function WindowButton({ label, children, className }: { label: string; children: ReactNode; className: string }) {
  return (
    <button type="button" aria-label={label} className={`flex items-center justify-center ${className}`}>
      {children}
    </button>
  );
}

export default function App() {
  return (
    <div className="flex h-screen flex-col overflow-hidden bg-[#cfcfe6] font-['Roboto',sans-serif] text-xs text-black">
      <header className="flex h-[23px] shrink-0 items-center bg-white pl-[3px]">
        <AppLogo />
        <h1 className="ml-1.5 text-xs">CATIA V5 for Student - [Valve.CATProduct]</h1>
        <div className="ml-auto flex h-full">
          <WindowButton label="Minimize" className="w-[45px]">
            <svg viewBox="0 0 10 10" className="size-2.5"><path d="M0 5.5h10" stroke={K} /></svg>
          </WindowButton>
          <WindowButton label="Restore" className="w-[45px]">
            <svg viewBox="0 0 10 10" className="size-2.5" fill="none" stroke={K}>
              <path d="M.5 2.5h7v7h-7zM2.5 2.5v-2h7v7h-2" />
            </svg>
          </WindowButton>
          <WindowButton label="Close" className="w-12">
            <svg viewBox="0 0 10 10" className="size-2.5" stroke={K}><path d="M0 0l10 10M10 0L0 10" /></svg>
          </WindowButton>
        </div>
      </header>

      <nav aria-label="Main menu" className="flex h-[19px] shrink-0 items-stretch pl-[5px]">
        <span className="flex w-4 items-center bg-white pl-px"><AppLogo /></span>
        <button type="button" className="w-[43px] bg-[#fde4bd] pl-0.5 text-left leading-none"><u>S</u>tart</button>
        {MENUS.map(([label, width]) => (
          <button key={label} type="button" className={`pl-0.5 text-left leading-none ${width}`}>
            <u>{label[0]}</u>{label.slice(1)}
          </button>
        ))}
        <div className="ml-auto flex gap-px pr-px">
          <WindowButton label="Minimize document" className="w-[18px] border border-[#e4e4ee] bg-white">
            <svg viewBox="0 0 10 10" className="size-2.5"><path d="M2 8h6" stroke="#778599" strokeWidth="2" /></svg>
          </WindowButton>
          <WindowButton label="Restore document" className="w-[18px] border border-[#e4e4ee] bg-white">
            <svg viewBox="0 0 10 10" className="size-2.5" fill="none" stroke="#778599">
              <path d="M1.5 4.5h5v4h-5zM1 5h6M3.5 4v-2.5h5v4h-2M3 2h6" />
            </svg>
          </WindowButton>
          <WindowButton label="Close document" className="w-[18px] border border-[#e4e4ee] bg-white">
            <svg viewBox="0 0 10 10" className="size-2.5" stroke="#778599" strokeWidth="2"><path d="M2 2l6 6M8 2L2 8" /></svg>
          </WindowButton>
        </div>
      </nav>

      <div className="flex h-9 shrink-0 items-center gap-2.5 bg-linear-to-b from-white via-[#cfcfe6] via-25% to-[#cfcfe6] to-70% pt-1 pl-[7px] shadow-[inset_0_-6px_6px_-2px_#8c8ca4]">
        <HGroup tools={STANDARD} />
        <HGroup tools={VIEW} />
        <HGroup tools={CONSTRAINTS} />
      </div>

      <div className="flex min-h-0 grow border-t border-[#555]">
        <div className="flex min-w-0 grow flex-col">
          <main className="flex min-h-0 grow border-t-2 border-l-2 border-[#8e8e86] bg-linear-to-b from-[#343365] via-[#464675] via-67% to-[#adadc2]">
            <div className="flex w-4 shrink-0 flex-col border-r border-[#444480]">
              <button type="button" aria-label="Scroll up" className="flex h-4 items-center justify-center bg-[#7b7bff]">
                <svg viewBox="0 0 10 9" className="h-[9px] w-2.5"><path d="M5 0l5 9H0z" /></svg>
              </button>
              <div className="grow-[581] bg-[repeating-conic-gradient(#7b7bff_0_25%,#333366_0_50%)] bg-[length:2px_2px]" />
              <div className="grow-[645] border-t border-[#c8c8ff] bg-[#7878fb]" />
              <button type="button" aria-label="Scroll down" className="flex h-4 items-center justify-center border-t border-[#33336a] bg-[#7b7bff]">
                <svg viewBox="0 0 10 9" className="h-[9px] w-2.5"><path d="M5 9L0 0h10z" /></svg>
              </button>
            </div>
            <div className="relative grow">
              <Model />
            </div>
          </main>
          <div className="flex h-[37px] shrink-0 items-center gap-2.5 bg-linear-to-b from-white from-8% via-[#cfcfe6] via-35% to-[#cfcfe6] pt-[5px] pl-[7px] shadow-[inset_0_-6px_6px_-2px_#8c8ca4]">
            <HGroup tools={KNOWLEDGE} narrow />
            <span className="mr-1.5 mb-6 h-1.5 w-0.5 border-r border-[#9a9aa8] bg-white" />
            {BOTTOM.map((tools) => (
              <HGroup key={tools[0].icon} tools={tools} />
            ))}
          </div>
        </div>
        <aside
          aria-label="Assembly toolbars"
          className="relative flex w-[38px] shrink-0 flex-col bg-linear-to-r from-white from-10% via-[#cfcfe6] via-30% to-[#cfcfe6] pl-1.5 shadow-[inset_-6px_0_6px_-2px_#8c8ca4]"
        >
          {SIDE.map((g) => (
            <VGroup key={g.tools[0].icon} tools={g.tools} className={g.className} />
          ))}
          <svg viewBox="0 0 42 34" className="absolute right-1 bottom-0.5 h-[34px] w-[42px] overflow-visible" role="img" aria-label="CATIA">
            <path d="M8 1c7-1 10 1 9 3-1 3-4 5-8 6 3-2 6-4 5-6 0-2-3-2-6-3z" fill="#e02828" />
            <path d="M3 12c8-2 11 0 9 4-2 5-7 8-12 7l3-8h3l-2 6c3 0 5-3 6-5 1-3-2-4-7-4z" fill="#3c2a84" />
            <path d="M24 9c-6-1-9 1-8 4 1 2 4 3 2 5-1 1-4 1-6 1 2 2 7 2 9-1 2-4-4-5-3-7 1-1 3-2 6-2z" fill="#f09c10" />
            <text x="6" y="29" fontSize="10" fontWeight="bold" fontStyle="italic" fontFamily="Open Sans" fill="#3c2a84">CATIA</text>
          </svg>
        </aside>
      </div>

      <footer className="flex h-[22px] shrink-0 items-stretch gap-0.5 border-t-2 border-[#6a6a76] pl-[3px]">
        <p className="self-center pt-0.5 text-xs">Select an object or a command</p>
        <input aria-label="Power input" className="ml-auto w-[300px] border-t border-l border-[#666] border-r border-r-[#999] bg-white px-1 outline-none" />
        <button type="button" aria-label="Dialog box" className="flex w-8 items-center justify-center border-r-2 border-[#84848c]">
          <svg viewBox="0 0 16 14" className="h-3.5 w-4">
            <path d="M0 0h16v14H0z" fill="#c6c6c6" />
            <path d="M2.5 3h6v5h-6zM11 11h3" fill="none" stroke="#666" strokeWidth="1.5" />
          </svg>
        </button>
        <button type="button" aria-label="Information" className="flex w-8 items-center justify-center border-r-2 border-[#84848c]">
          <svg viewBox="0 0 16 14" className="h-3.5 w-4">
            <path d="M0 0h16v14H0z" fill="#c6c6c6" />
            <path d="M5 1h6l3 3v5l-3 3H5L2 9V4z" fill="#eee" stroke="#888" />
            <text x="6" y="10" fontSize="9" fontFamily="Liberation Serif" fill="#777">i</text>
          </svg>
        </button>
      </footer>
    </div>
  );
}
